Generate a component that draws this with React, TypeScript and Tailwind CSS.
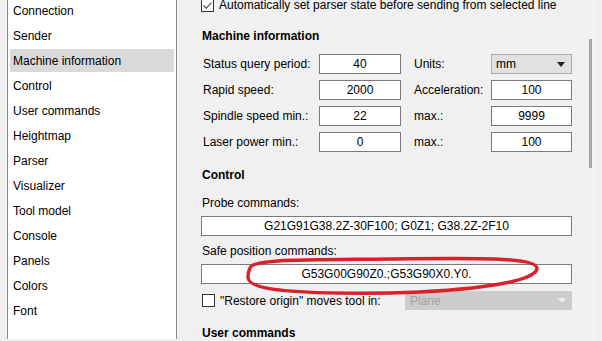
import React from 'react'

const sections = [
  'Connection',
  'Sender',
  'Machine information',
  'Control',
  'User commands',
  'Heightmap',
  'Parser',
  'Visualizer',
  'Tool model',
  'Console',
  'Panels',
  'Colors',
  'Font',
]

function CheckBox({ checked }: { checked?: boolean }) {
  return (
    <div className="w-[13px] h-[13px] border border-[#333] bg-white flex items-center justify-center shrink-0">
      {checked && (
        <svg width="11" height="11" viewBox="0 0 11 11">
          <path d="M1.5 5.5 L4.3 8.3 L9.5 2.5" fill="none" stroke="#333" strokeWidth="1.1" />
        </svg>
      )}
    </div>
  )
}

function Field({ value, className = '' }: { value: string; className?: string }) {
  return (
    <div className={`h-[20px] border border-[#7a7a7a] bg-white flex items-center justify-center shrink-0 ${className}`}>
      {value}
    </div>
  )
}

function Row({ label, value, label2, value2, combo }: { label: string; value: string; label2: string; value2?: string; combo?: boolean }) {
  return (
    <div className="flex items-center h-[20px] mt-[6px] first:mt-0">
      <div className="w-[118px] pl-[2px] shrink-0">{label}</div>
      <Field value={value} className="w-[82px]" />
      <div className="w-[90px] pl-[13px] shrink-0">{label2}</div>
      {combo ? (
        <div className="w-[81px] h-[20px] border border-[#adadad] bg-[#e1e1e1] flex items-center justify-between pl-[4px] pr-[6px] shrink-0">
          <span>mm</span>
          <svg width="8" height="5" viewBox="0 0 8 5">
            <path d="M0 0 H8 L4 5 Z" fill="#222" />
          </svg>
        </div>
      ) : (
        <Field value={value2 ?? ''} className="w-[81px]" />
      )}
    </div>
  )
}

export default function App() {
  return (
    <div
      className="relative w-[602px] h-[341px] overflow-hidden bg-[#f0f0f0] text-[12px] text-black flex"
      style={{ fontFamily: '"Liberation Sans", Arial, sans-serif' }}
    >
      {/* settings sections list */}
      <div className="ml-[7px] w-[170px] h-full bg-white border-x border-[#828790] -mt-[2px] shrink-0">
        {sections.map((s) => (
          <div key={s} className="h-[25px] px-[2px] py-[1px]">
            <div className={`h-[23px] flex items-center pl-[3px] ${s === 'Machine information' ? 'bg-[#d9d9d9]' : ''}`}>
              {s}
            </div>
          </div>
        ))}
      </div>

      {/* settings page */}
      <div className="w-[371px] ml-[24px] flex flex-col leading-none shrink-0">
        <div className="flex items-center gap-[5px] h-[16px] -mt-[3px]">
          <CheckBox checked />
          <span>Automatically set parser state before sending from selected line</span>
        </div>

        <div className="h-[16px] mt-[15px] pl-[1px] flex items-center font-bold">Machine information</div>

        <div className="mt-[10px] flex flex-col">
          <Row label="Status query period:" value="40" label2="Units:" combo />
          <Row label="Rapid speed:" value="2000" label2="Acceleration:" value2="100" />
          <Row label="Spindle speed min.:" value="22" label2="max.:" value2="9999" />
          <Row label="Laser power min.:" value="0" label2="max.:" value2="100" />
        </div>

        <div className="h-[16px] mt-[15px] pl-[1px] flex items-center font-bold">Control</div>

        <div className="h-[16px] mt-[12px] pl-[1px] flex items-center">Probe commands:</div>
        <Field value="G21G91G38.2Z-30F100; G0Z1; G38.2Z-2F10" className="mt-[5px]" />

        <div className="h-[16px] mt-[7px] pl-[1px] flex items-center">Safe position commands:</div>
        <Field value="G53G00G90Z0.;G53G90X0.Y0." className="mt-[5px]" />

        <div className="flex items-center h-[19px] mt-[7px]">
          <div className="flex items-center gap-[5px] w-[204px] pl-[1px] shrink-0">
            <CheckBox />
            <span>"Restore origin" moves tool in:</span>
          </div>
          <div className="flex-1 h-[19px] bg-[#cccccc] flex items-center justify-between pl-[5px] pr-[6px] text-[#a3a3a3]">
            <span>Plane</span>
            <svg width="8" height="5" viewBox="0 0 8 5">
              <path d="M0 0 H8 L4 5 Z" fill="#eeeeee" />
            </svg>
          </div>
        </div>

        <div className="h-[16px] mt-[15px] pl-[1px] flex items-center font-bold">User commands</div>
      </div>

      {/* scroll bar */}
      <div className="ml-[17px] w-[3px] h-[129px] mt-[39px] bg-[#a8a8a8] shrink-0" />
      <div className="ml-[1px] w-px h-full bg-[#f7f7f7] shrink-0" />

      {/* red marker annotation */}
      <svg className="absolute left-0 top-0 pointer-events-none" width="602" height="341" viewBox="0 0 602 341">
        <path
          d="M250 268 C252 259 300 260 390 259 C470 258 536 257 537 268 C538 282 470 291 390 293 C300 294 247 291 248 277 C248 273 249 270 250 268 Z"
          fill="none"
          stroke="#d9202b"
          strokeWidth="3.5"
        />
      </svg>
    </div>
  )
}
